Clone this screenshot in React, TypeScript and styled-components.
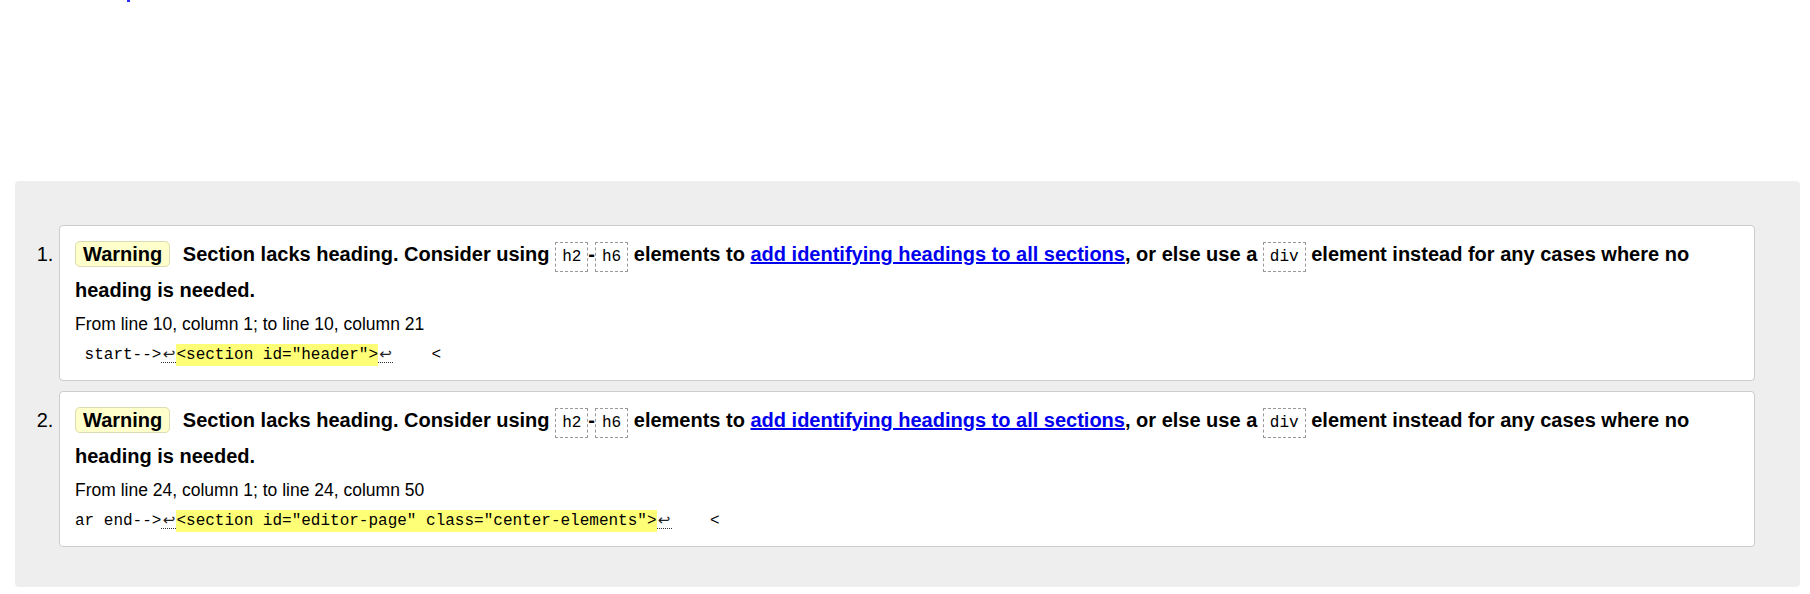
import React from "react";
import styled, { createGlobalStyle } from "styled-components";

const GlobalStyle = createGlobalStyle`
  html, body {
    margin: 0;
    padding: 0;
    background: #ffffff;
  }
  body {
    font-family: "Liberation Sans", Arial, sans-serif;
    color: #000000;
  }
`;

const Page = styled.div`
  padding: 0 10px 7px 15px;
`;

const TopStrip = styled.div`
  height: 181px;
  padding-left: 112px;
  box-sizing: border-box;
`;

const ClippedMark = styled.span`
  display: inline-block;
  vertical-align: top;
  width: 3px;
  height: 2px;
  background: #2a2aff;
`;

const Results = styled.div`
  background: #eeeeee;
  border-radius: 4px;
  padding: 44px 45px 40px 44px;
`;

const MessageList = styled.ol`
  margin: 0;
  padding: 0;
  list-style: decimal outside;
`;

const Message = styled.li`
  background: #ffffff;
  border: 1px solid #cccccc;
  border-radius: 4px;
  padding: 10px 16px 13px 15px;
  font-size: 20px;

  & + & {
    margin-top: 10px;
  }

  &::marker {
    font-size: 20px;
    font-weight: normal;
  }
`;

const Summary = styled.p`
  margin: 0;
  font-weight: bold;
  font-size: 20px;
  line-height: 36px;
`;

const Badge = styled.strong`
  background: #ffffcc;
  border: 1px solid #dcdcb4;
  border-radius: 5px;
  padding: 1px 7px;
  margin-right: 7px;
`;

const InlineCode = styled.code`
  font-family: "Liberation Mono", "DejaVu Sans Mono", monospace;
  font-weight: normal;
  font-size: 16px;
  line-height: 18px;
  border: 1px dashed #999999;
  padding: 5px 6px;
`;

const DocLink = styled.a`
  color: #0000ee;
  text-decoration: underline;
`;

const Location = styled.p`
  margin: 4px 0 0;
  font-size: 17.5px;
  line-height: 24px;
`;

const Extract = styled.p`
  margin: 7px 0 0;
  font-family: "Liberation Mono", "DejaVu Sans Mono", monospace;
  font-size: 16px;
  line-height: 24px;
`;

const ExtractCode = styled.code`
  font-family: "Liberation Mono", "DejaVu Sans Mono", monospace;
  font-size: 16px;
  white-space: pre;
`;

const Hit = styled.b`
  font-weight: normal;
  background: #ffff77;
  padding: 2px 0;
`;

const LineFeed = styled.span`
  display: inline-block;
  width: 15px;
  line-height: 16px;
  text-align: center;
  font-family: "DejaVu Sans", sans-serif;
  font-size: 15px;
  color: #222222;
  border-bottom: 1px dotted #333333;
`;

type Item = {
  line: number;
  endColumn: number;
  before: string;
  hit: string;
};

const items: Item[] = [
  { line: 10, endColumn: 21, before: " start-->", hit: '<section id="header">' },
  {
    line: 24,
    endColumn: 50,
    before: "ar end-->",
    hit: '<section id="editor-page" class="center-elements">',
  },
];

export default function App() {
  return (
    <>
      <GlobalStyle />
      <Page>
        <TopStrip>
          <ClippedMark />
        </TopStrip>
        <Results>
          <MessageList>
            {items.map((it) => (
              <Message key={it.line}>
                <Summary>
                  <Badge>Warning</Badge> Section lacks heading. Consider using{" "}
                  <InlineCode>h2</InlineCode>-<InlineCode>h6</InlineCode> elements to{" "}
                  <DocLink href="#">add identifying headings to all sections</DocLink>, or else use a{" "}
                  <InlineCode>div</InlineCode> element instead for any cases where no heading is needed.
                </Summary>
                <Location>
                  From line {it.line}, column 1; to line {it.line}, column {it.endColumn}
                </Location>
                <Extract>
                  <ExtractCode>
                    {it.before}
                    <LineFeed>↩</LineFeed>
                    <Hit>{it.hit}</Hit>
                    <LineFeed>↩</LineFeed>
                    {"    <"}
                  </ExtractCode>
                </Extract>
              </Message>
            ))}
          </MessageList>
        </Results>
      </Page>
    </>
  );
}
